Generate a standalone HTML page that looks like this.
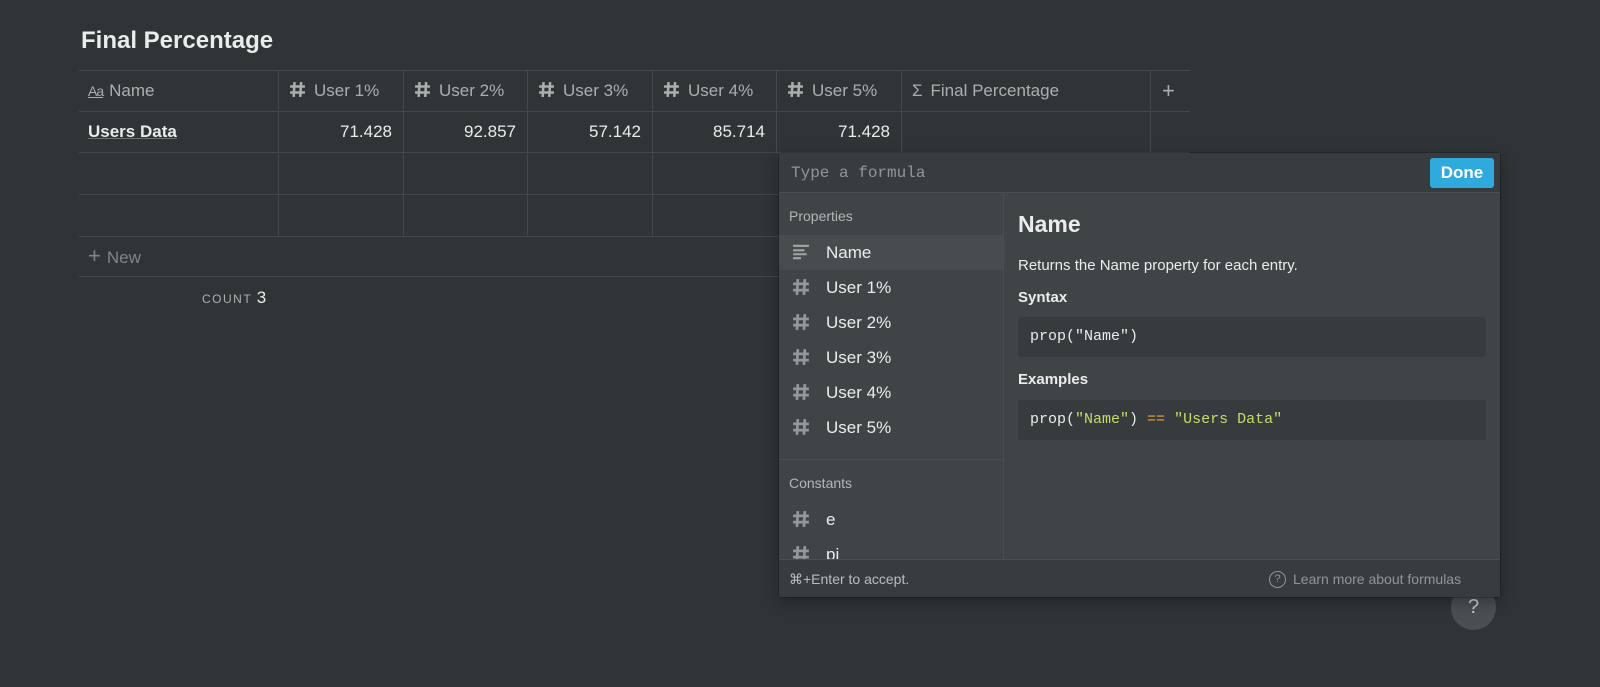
<!DOCTYPE html><html><head><style>
*{margin:0;padding:0;box-sizing:border-box}
body{width:1600px;height:687px;background:#2f3437;font-family:"Liberation Sans",sans-serif;color:rgba(255,255,255,.9);position:relative;overflow:hidden}
.abs{position:absolute}
.h{position:absolute;height:1px;background:#43484b}
.v{position:absolute;width:1px;background:#43484b}
.hd{position:absolute;top:70px;height:41px;line-height:41px;font-size:17px;color:rgba(255,255,255,.6)}
.num{position:absolute;top:111px;height:41px;line-height:41px;font-size:17px;text-align:right}
.hash{display:inline-block;width:17px;height:17px;vertical-align:-2px;margin-right:8px}
.li{position:absolute;left:779px;width:224px;height:35px;line-height:35px;font-size:17px}
.li svg{position:absolute;left:13px;top:8px}
.li span{position:absolute;left:47px}
.mono{font-family:"Liberation Mono",monospace}
</style></head><body>
<svg width="0" height="0" style="position:absolute"><defs><symbol id="h" viewBox="0 0 16 16"><path d="M5.2 1L4.4 15M11.4 1L10.6 15M1 5.2H15M1 10.8H15" stroke="currentColor" stroke-width="2.4" fill="none"/></symbol></defs></svg>
<div class="abs" style="left:81px;top:27px;font-size:24px;font-weight:bold;color:rgba(255,255,255,.9)">Final Percentage</div>
<div class="h" style="left:79px;width:1111px;top:70px"></div>
<div class="h" style="left:79px;width:1111px;top:111px"></div>
<div class="h" style="left:79px;width:1111px;top:152px"></div>
<div class="h" style="left:79px;width:700px;top:194px"></div>
<div class="h" style="left:79px;width:700px;top:236px"></div>
<div class="h" style="left:79px;width:700px;top:276px"></div>
<div class="v" style="left:278px;top:70px;height:166px"></div>
<div class="v" style="left:403px;top:70px;height:166px"></div>
<div class="v" style="left:527px;top:70px;height:166px"></div>
<div class="v" style="left:652px;top:70px;height:166px"></div>
<div class="v" style="left:776px;top:70px;height:83px"></div>
<div class="v" style="left:901px;top:70px;height:83px"></div>
<div class="v" style="left:1150px;top:70px;height:83px"></div>
<div class="hd" style="left:88px"><span style="font-size:14px;text-decoration:underline;margin-right:6px;letter-spacing:-1px">Aa</span>Name</div>
<div class="hd" style="left:289px"><svg class="hash"><use href="#h"/></svg>User 1%</div>
<div class="hd" style="left:414px"><svg class="hash"><use href="#h"/></svg>User 2%</div>
<div class="hd" style="left:538px"><svg class="hash"><use href="#h"/></svg>User 3%</div>
<div class="hd" style="left:663px"><svg class="hash"><use href="#h"/></svg>User 4%</div>
<div class="hd" style="left:787px"><svg class="hash"><use href="#h"/></svg>User 5%</div>
<div class="hd" style="left:912px"><span style="margin-right:8px">Σ</span>Final Percentage</div>
<div class="hd" style="left:1162px;font-size:22px">+</div>
<div class="abs" style="left:88px;top:111px;line-height:41px;font-size:17px;font-weight:bold;text-decoration:underline;text-decoration-color:rgba(255,255,255,.3)">Users Data</div>
<div class="num" style="left:278px;width:114px">71.428</div>
<div class="num" style="left:403px;width:113px">92.857</div>
<div class="num" style="left:527px;width:114px">57.142</div>
<div class="num" style="left:652px;width:113px">85.714</div>
<div class="num" style="left:776px;width:114px">71.428</div>
<div class="abs" style="left:88px;top:236px;line-height:40px;font-size:17px;color:rgba(255,255,255,.4)"><span style="font-size:22px;margin-right:6px">+</span>New</div>
<div class="abs" style="left:202px;top:288px;font-size:12px;letter-spacing:1.5px;color:rgba(255,255,255,.6)">COUNT <span style="font-size:17px;color:rgba(255,255,255,.9);letter-spacing:0">3</span></div>
<div class="abs" style="left:1451px;top:585px;width:45px;height:45px;border-radius:50%;background:#4a4f52;text-align:center;line-height:45px;font-size:20px;color:rgba(255,255,255,.7)">?</div>
<div class="abs" style="left:779px;top:153px;width:721px;height:444px;background:#3f4447;border-radius:3px;box-shadow:0 0 0 1px rgba(0,0,0,.2),0 5px 15px rgba(0,0,0,.3)"></div>
<div class="abs" style="left:779px;top:153px;width:721px;height:40px;background:#373c3f;border-bottom:1px solid #4a4f52"></div>
<div class="abs mono" style="left:791px;top:164px;font-size:16px;color:rgba(255,255,255,.45)">Type a formula</div>
<div class="abs" style="left:1430px;top:158px;width:64px;height:30px;background:#2eaadc;border-radius:3px;color:#fff;font-weight:bold;font-size:17px;text-align:center;line-height:30px">Done</div>
<div class="v" style="left:1003px;top:194px;height:365px;background:#4a4f52"></div>
<div class="h" style="left:779px;width:224px;top:459px;background:#4a4f52"></div>
<div class="abs" style="left:789px;top:208px;font-size:14px;color:rgba(255,255,255,.6)">Properties</div>
<div class="abs" style="left:779px;top:235px;width:224px;height:35px;background:#474c4f"></div>
<div class="li" style="top:235px"><svg width="18" height="18" viewBox="0 0 16 16"><path d="M1 2.5H15M1 6.5H11M1 10H13M1 13.5H8" stroke="rgba(255,255,255,.5)" stroke-width="1.8"/></svg><span>Name</span></div>
<div class="li" style="top:270px"><svg width="18" height="18" style="color:rgba(255,255,255,.45)"><use href="#h"/></svg><span>User 1%</span></div>
<div class="li" style="top:305px"><svg width="18" height="18" style="color:rgba(255,255,255,.45)"><use href="#h"/></svg><span>User 2%</span></div>
<div class="li" style="top:340px"><svg width="18" height="18" style="color:rgba(255,255,255,.45)"><use href="#h"/></svg><span>User 3%</span></div>
<div class="li" style="top:375px"><svg width="18" height="18" style="color:rgba(255,255,255,.45)"><use href="#h"/></svg><span>User 4%</span></div>
<div class="li" style="top:410px"><svg width="18" height="18" style="color:rgba(255,255,255,.45)"><use href="#h"/></svg><span>User 5%</span></div>
<div class="abs" style="left:789px;top:475px;font-size:14px;color:rgba(255,255,255,.6)">Constants</div>
<div class="li" style="top:502px"><svg width="18" height="18" style="color:rgba(255,255,255,.45)"><use href="#h"/></svg><span>e</span></div>
<div class="abs" style="left:779px;top:537px;width:224px;height:22px;overflow:hidden"><div class="li" style="left:0;top:0"><svg width="18" height="18" style="color:rgba(255,255,255,.45)"><use href="#h"/></svg><span>pi</span></div></div>
<div class="abs" style="left:1018px;top:211px;font-size:23px;font-weight:bold">Name</div>
<div class="abs" style="left:1018px;top:257px;font-size:15px">Returns the Name property for each entry.</div>
<div class="abs" style="left:1018px;top:289px;font-size:15px;font-weight:bold">Syntax</div>
<div class="abs mono" style="left:1018px;top:317px;width:468px;height:40px;background:#363b3e;border-radius:3px;line-height:40px;padding-left:12px;font-size:15px">prop("Name")</div>
<div class="abs" style="left:1018px;top:371px;font-size:15px;font-weight:bold">Examples</div>
<div class="abs mono" style="left:1018px;top:400px;width:468px;height:40px;background:#363b3e;border-radius:3px;line-height:40px;padding-left:12px;font-size:15px">prop(<span style="color:#c5dc6a">"Name"</span>) <span style="color:#e4a53a">==</span> <span style="color:#c5dc6a">"Users Data"</span></div>
<div class="abs" style="left:779px;top:559px;width:721px;height:38px;background:#373c3f;border-top:1px solid #4a4f52"></div>
<div class="abs" style="left:789px;top:571px;font-size:14px;color:rgba(255,255,255,.65)">⌘+Enter to accept.</div>
<div class="abs" style="left:1269px;top:569px;font-size:14px;color:rgba(255,255,255,.45);display:flex;align-items:center;height:20px"><span style="display:inline-block;width:17px;height:17px;border:1.3px solid rgba(255,255,255,.45);border-radius:50%;text-align:center;line-height:15px;font-size:11px;margin-right:7px">?</span>Learn more about formulas</div>
</body></html>
